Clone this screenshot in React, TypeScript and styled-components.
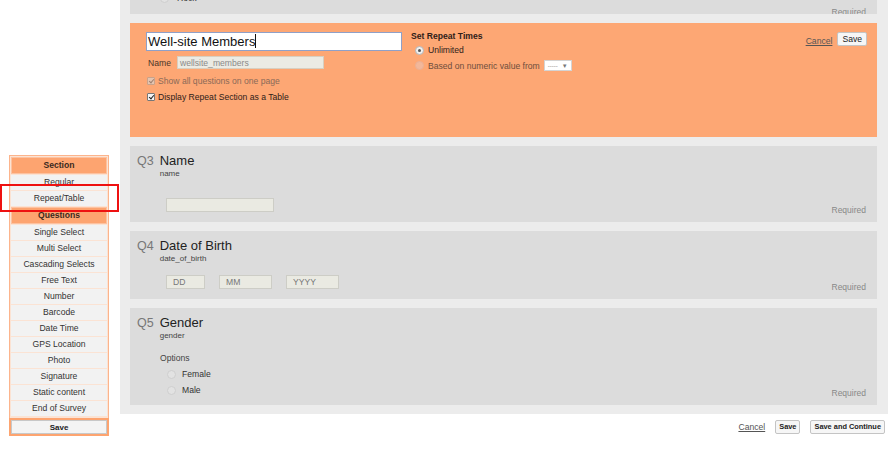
import React from 'react';
import styled, { createGlobalStyle } from 'styled-components';

const GlobalStyle = createGlobalStyle`
  html, body {
    margin: 0;
    padding: 0;
    background: #ffffff;
    font-family: "Liberation Sans", Arial, sans-serif;
    color: #333;
  }
  * { box-sizing: border-box; }
`;

const Page = styled.div`
  display: flex;
  width: 891px;
  height: 465px;
  overflow: hidden;
`;

const SideColumn = styled.div`
  position: relative;
  width: 120px;
  flex-shrink: 0;
  padding: 155px 0 0 9px;
`;

const Palette = styled.div`
  width: 100px;
  border: 1px solid #fcb48c;
  background: #fbe3d4;
  padding: 1px;
  display: flex;
  flex-direction: column;
  gap: 1px;
`;

const PaletteHeader = styled.div`
  height: 17px;
  line-height: 14px;
  background: #fda470;
  border: 1px solid #fdc2a0;
  text-align: center;
  font-size: 8.6px;
  font-weight: bold;
  color: #3a2a20;
`;

const PaletteItem = styled.div`
  height: 15px;
  line-height: 15px;
  background: #f2f2f2;
  text-align: center;
  font-size: 8.6px;
  color: #333;
`;

const PaletteSave = styled.div`
  border: 2px solid #fda470;
  margin: 1px -2px -2px;
`;

const PaletteSaveButton = styled.div`
  height: 14px;
  line-height: 13px;
  background: #f4f4f4;
  border: 1px solid #c8c8c8;
  text-align: center;
  font-size: 8px;
  font-weight: bold;
  color: #222;
`;

const Highlight = styled.div`
  position: absolute;
  left: 0;
  top: 184px;
  width: 119px;
  height: 28px;
  border: 2px solid #ee1111;
`;

const MainColumn = styled.div`
  width: 768px;
  display: flex;
  flex-direction: column;
`;

const Canvas = styled.div`
  background: #ececec;
  padding: 0 11px 9px 10px;
  display: flex;
  flex-direction: column;
  gap: 9px;
`;

const Card = styled.div<{ $h: number }>`
  position: relative;
  height: ${p => p.$h}px;
  background: #dcdcdc;
  padding: 7px 7px 6px;
`;

const ClippedCard = styled.div`
  position: relative;
  height: 14px;
  background: #dcdcdc;
  overflow: hidden;
`;

const ClippedRow = styled.div`
  display: flex;
  align-items: center;
  gap: 8px;
  margin: -7px 0 0 30px;
  font-size: 8.6px;
  color: #333;
`;

const Required = styled.div<{ $bottom: number }>`
  position: absolute;
  right: 11px;
  bottom: ${p => p.$bottom}px;
  font-size: 8.5px;
  color: #888;
`;

const EditCard = styled.div`
  height: 114px;
  background: #fda774;
  padding: 9px 10px 0 16px;
  display: flex;
`;

const EditLeft = styled.div`
  width: 265px;
  display: flex;
  flex-direction: column;
`;

const TitleInput = styled.div`
  width: 256px;
  height: 19px;
  background: #ffffff;
  border: 1px solid #8fa0c8;
  font-size: 13px;
  line-height: 17px;
  padding-left: 1px;
  color: #111;
`;

const Caret = styled.span`
  display: inline-block;
  width: 1px;
  height: 14px;
  background: #111;
  vertical-align: -2px;
`;

const NameRow = styled.div`
  display: flex;
  align-items: center;
  gap: 6px;
  margin: 5px 0 0 2px;
  font-size: 8.6px;
  color: #4a3528;
`;

const NameInput = styled.div`
  width: 147px;
  height: 13px;
  line-height: 12px;
  background: #ebebe4;
  border: 1px solid #d8cfc0;
  padding-left: 2px;
  color: #8a8a8a;
  font-size: 8.6px;
`;

const CheckRow = styled.label<{ $disabled?: boolean }>`
  display: flex;
  align-items: center;
  gap: 3px;
  margin: ${p => (p.$disabled ? 7 : 6)}px 0 0 1px;
  font-size: 8.6px;
  color: ${p => (p.$disabled ? '#8a6a58' : '#2e2018')};
`;

const CheckBox = styled.span<{ $disabled?: boolean }>`
  position: relative;
  width: 8px;
  height: 8px;
  border: 1px solid ${p => (p.$disabled ? '#c9a28a' : '#777')};
  background: ${p => (p.$disabled ? '#e4c4b0' : '#f4f4f4')};
  border-radius: 1px;
  &::after {
    content: '';
    position: absolute;
    left: 2px;
    top: 0px;
    width: 2px;
    height: 4px;
    border: solid ${p => (p.$disabled ? '#a08070' : '#222')};
    border-width: 0 1.5px 1.5px 0;
    transform: rotate(40deg);
  }
`;

const EditRight = styled.div`
  flex: 1;
  display: flex;
  flex-direction: column;
  margin-top: -1px;
`;

const SetTitle = styled.div`
  font-size: 8.6px;
  font-weight: bold;
  color: #2e2018;
  margin-bottom: 4px;
`;

const RadioRow = styled.div<{ $disabled?: boolean }>`
  display: flex;
  align-items: center;
  gap: 4px;
  margin: 0 0 5px 4px;
  font-size: 8.6px;
  color: ${p => (p.$disabled ? '#6e4e3c' : '#2e2018')};
`;

const RadioDot = styled.span<{ $checked?: boolean; $tone?: 'light' | 'orange' }>`
  position: relative;
  width: 9px;
  height: 9px;
  border-radius: 50%;
  border: 1px solid ${p => (p.$tone === 'orange' ? '#eab095' : '#cfcfcf')};
  background: ${p => (p.$tone === 'orange' ? '#f2b79a' : '#e2e2e2')};
  ${p =>
    p.$checked &&
    `
    background: #f0f0f0;
    border-color: #b5b5b5;
    &::after {
      content: '';
      position: absolute;
      left: 2px;
      top: 2px;
      width: 3px;
      height: 3px;
      border-radius: 50%;
      background: #555;
    }
  `}
`;

const MiniSelect = styled.span`
  display: inline-flex;
  align-items: center;
  justify-content: space-between;
  width: 28px;
  height: 11px;
  padding: 0 3px;
  background: #ffffff;
  border: 1px solid #d4d4d4;
  font-size: 6px;
  color: #777;
`;

const EditActions = styled.div`
  display: flex;
  align-items: flex-start;
  gap: 5px;
`;

const LinkButton = styled.span<{ $top?: number }>`
  font-size: 8.6px;
  color: #555;
  text-decoration: underline;
  margin-top: ${p => p.$top ?? 0}px;
`;

const SmallButton = styled.span<{ $bold?: boolean }>`
  display: inline-block;
  height: 14px;
  line-height: 12px;
  padding: 0 ${p => (p.$bold ? 3 : 4)}px;
  background: #f6f6f6;
  border: 1px solid #c4c4c4;
  border-radius: 2px;
  font-size: ${p => (p.$bold ? '7.4px' : '8.6px')};
  font-weight: ${p => (p.$bold ? 'bold' : 'normal')};
  color: #222;
`;

const QHead = styled.div`
  display: flex;
  align-items: baseline;
  gap: 6px;
`;

const QNum = styled.span`
  font-size: 12.5px;
  color: #777;
`;

const QTitleBlock = styled.div`
  display: flex;
  flex-direction: column;
`;

const QTitle = styled.span`
  font-size: 13px;
  color: #222;
`;

const QVar = styled.span`
  font-size: 8px;
  color: #444;
  margin-top: 1px;
`;

const Field = styled.div<{ $w: number }>`
  width: ${p => p.$w}px;
  height: 14px;
  line-height: 13px;
  background: #eaeae2;
  border: 1px solid #cdcdc6;
  padding-left: 6px;
  font-size: 8.6px;
  color: #777;
`;

const FieldRow = styled.div<{ $top: number }>`
  display: flex;
  gap: 14px;
  margin: ${p => p.$top}px 0 0 29px;
`;

const Options = styled.div`
  display: flex;
  flex-direction: column;
  margin: 13px 0 0 23px;
  font-size: 8.6px;
  color: #444;
  gap: 6px;
`;

const OptionRow = styled.div`
  display: flex;
  align-items: center;
  gap: 6px;
  margin-left: 7px;
  color: #333;
`;

const Footer = styled.div`
  display: flex;
  justify-content: flex-end;
  align-items: center;
  gap: 10px;
  padding: 6px 3px 0 0;
`;

const App: React.FC = () => {
  const palette = [
    'Single Select',
    'Multi Select',
    'Cascading Selects',
    'Free Text',
    'Number',
    'Barcode',
    'Date Time',
    'GPS Location',
    'Photo',
    'Signature',
    'Static content',
    'End of Survey',
  ];

  return (
    <>
      <GlobalStyle />
      <Page>
        <SideColumn>
          <Palette>
            <PaletteHeader>Section</PaletteHeader>
            <PaletteItem>Regular</PaletteItem>
            <PaletteItem>Repeat/Table</PaletteItem>
            <PaletteHeader>Questions</PaletteHeader>
            {palette.map(p => (
              <PaletteItem key={p}>{p}</PaletteItem>
            ))}
            <PaletteSave>
              <PaletteSaveButton>Save</PaletteSaveButton>
            </PaletteSave>
          </Palette>
          <Highlight />
        </SideColumn>

        <MainColumn>
          <Canvas>
            <ClippedCard>
              <ClippedRow>
                <RadioDot />
                <span>Rock</span>
              </ClippedRow>
              <Required $bottom={-3}>Required</Required>
            </ClippedCard>

            <EditCard>
              <EditLeft>
                <TitleInput>
                  Well-site Members<Caret />
                </TitleInput>
                <NameRow>
                  <span>Name</span>
                  <NameInput>wellsite_members</NameInput>
                </NameRow>
                <CheckRow $disabled>
                  <CheckBox $disabled />
                  Show all questions on one page
                </CheckRow>
                <CheckRow>
                  <CheckBox />
                  Display Repeat Section as a Table
                </CheckRow>
              </EditLeft>
              <EditRight>
                <SetTitle>Set Repeat Times</SetTitle>
                <RadioRow>
                  <RadioDot $checked />
                  Unlimited
                </RadioRow>
                <RadioRow $disabled>
                  <RadioDot $tone="orange" />
                  Based on numeric value from
                  <MiniSelect>
                    <span>-----</span>
                    <span>▼</span>
                  </MiniSelect>
                </RadioRow>
              </EditRight>
              <EditActions>
                <LinkButton $top={4}>Cancel</LinkButton>
                <SmallButton>Save</SmallButton>
              </EditActions>
            </EditCard>

            <Card $h={76}>
              <QHead>
                <QNum>Q3</QNum>
                <QTitleBlock>
                  <QTitle>Name</QTitle>
                  <QVar>name</QVar>
                </QTitleBlock>
              </QHead>
              <FieldRow $top={20}>
                <Field $w={108} />
              </FieldRow>
              <Required $bottom={7}>Required</Required>
            </Card>

            <Card $h={68}>
              <QHead>
                <QNum>Q4</QNum>
                <QTitleBlock>
                  <QTitle>Date of Birth</QTitle>
                  <QVar>date_of_birth</QVar>
                </QTitleBlock>
              </QHead>
              <FieldRow $top={12}>
                <Field $w={39}>DD</Field>
                <Field $w={53}>MM</Field>
                <Field $w={53}>YYYY</Field>
              </FieldRow>
              <Required $bottom={7}>Required</Required>
            </Card>

            <Card $h={97}>
              <QHead>
                <QNum>Q5</QNum>
                <QTitleBlock>
                  <QTitle>Gender</QTitle>
                  <QVar>gender</QVar>
                </QTitleBlock>
              </QHead>
              <Options>
                <span>Options</span>
                <OptionRow>
                  <RadioDot />
                  Female
                </OptionRow>
                <OptionRow>
                  <RadioDot />
                  Male
                </OptionRow>
              </Options>
              <Required $bottom={7}>Required</Required>
            </Card>
          </Canvas>
          <Footer>
            <LinkButton>Cancel</LinkButton>
            <SmallButton $bold>Save</SmallButton>
            <SmallButton $bold>Save and Continue</SmallButton>
          </Footer>
        </MainColumn>
      </Page>
    </>
  );
};

export default App;
